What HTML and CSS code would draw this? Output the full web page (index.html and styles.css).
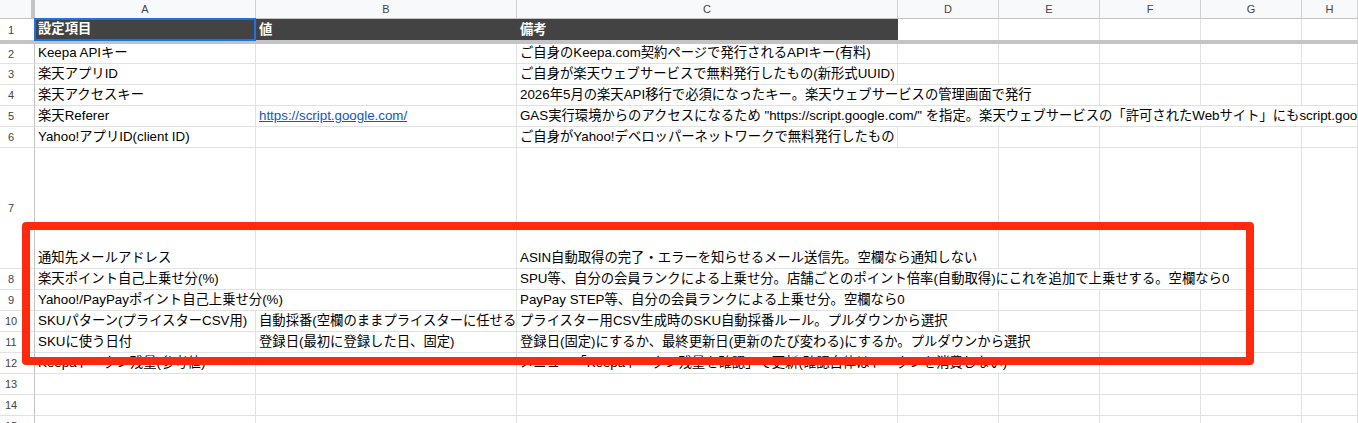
FILE: index.html
```html
<!DOCTYPE html>
<html lang="ja">
<head>
<meta charset="utf-8">
<title>設定</title>
<link rel="stylesheet" href="styles.css">
</head>
<body>
<div class="sheet">
  <div class="row colhead">
    <div class="corner"></div>
    <div class="ch">A</div><div class="ch">B</div><div class="ch">C</div><div class="ch">D</div><div class="ch">E</div><div class="ch">F</div><div class="ch">G</div><div class="ch">H</div>
  </div>

  <div class="row r1">
    <div class="rn">1</div>
    <div class="c hd sel">設定項目</div>
    <div class="c hd">値</div>
    <div class="c hd">備考</div>
    <div class="c"></div><div class="c"></div><div class="c"></div><div class="c"></div><div class="c"></div>
  </div>
  <div class="freeze"></div>

  <div class="row r2">
    <div class="rn">2</div>
    <div class="c">Keepa APIキー</div>
    <div class="c"></div>
    <div class="c">ご自身のKeepa.com契約ページで発行されるAPIキー(有料)</div>
    <div class="c"></div><div class="c"></div><div class="c"></div><div class="c"></div><div class="c"></div>
  </div>

  <div class="row">
    <div class="rn">3</div>
    <div class="c">楽天アプリID</div>
    <div class="c"></div>
    <div class="c">ご自身が楽天ウェブサービスで無料発行したもの(新形式UUID)</div>
    <div class="c"></div><div class="c"></div><div class="c"></div><div class="c"></div><div class="c"></div>
  </div>

  <div class="row">
    <div class="rn">4</div>
    <div class="c">楽天アクセスキー</div>
    <div class="c"></div>
    <div class="c span3">2026年5月の楽天API移行で必須になったキー。楽天ウェブサービスの管理画面で発行</div>
    <div class="c"></div><div class="c"></div><div class="c"></div>
  </div>

  <div class="row">
    <div class="rn">5</div>
    <div class="c">楽天Referer</div>
    <div class="c"><a class="link" href="#">https://script.google.com/</a></div>
    <div class="c spanall clip">GAS実行環境からのアクセスになるため "https://script.google.com/" を指定。楽天ウェブサービスの「許可されたWebサイト」にもscript.google.com を登録</div>
  </div>

  <div class="row">
    <div class="rn">6</div>
    <div class="c">Yahoo!アプリID(client ID)</div>
    <div class="c"></div>
    <div class="c">ご自身がYahoo!デベロッパーネットワークで無料発行したもの</div>
    <div class="c"></div><div class="c"></div><div class="c"></div><div class="c"></div><div class="c"></div>
  </div>

  <div class="row r7">
    <div class="rn">7</div>
    <div class="c">通知先メールアドレス</div>
    <div class="c"></div>
    <div class="c span2">ASIN自動取得の完了・エラーを知らせるメール送信先。空欄なら通知しない</div>
    <div class="c"></div><div class="c"></div><div class="c"></div><div class="c"></div>
  </div>

  <div class="row">
    <div class="rn">8</div>
    <div class="c">楽天ポイント自己上乗せ分(%)</div>
    <div class="c"></div>
    <div class="c span5">SPU等、自分の会員ランクによる上乗せ分。店舗ごとのポイント倍率(自動取得)にこれを追加で上乗せする。空欄なら0</div>
    <div class="c"></div>
  </div>

  <div class="row">
    <div class="rn">9</div>
    <div class="c span2">Yahoo!/PayPayポイント自己上乗せ分(%)</div>
    <div class="c span2">PayPay STEP等、自分の会員ランクによる上乗せ分。空欄なら0</div>
    <div class="c"></div><div class="c"></div><div class="c"></div><div class="c"></div>
  </div>

  <div class="row">
    <div class="rn">10</div>
    <div class="c">SKUパターン(プライスターCSV用)</div>
    <div class="c clip">自動採番(空欄のままプライスターに任せる)</div>
    <div class="c span2">プライスター用CSV生成時のSKU自動採番ルール。プルダウンから選択</div>
    <div class="c"></div><div class="c"></div><div class="c"></div><div class="c"></div>
  </div>

  <div class="row">
    <div class="rn">11</div>
    <div class="c">SKUに使う日付</div>
    <div class="c">登録日(最初に登録した日、固定)</div>
    <div class="c span3">登録日(固定)にするか、最終更新日(更新のたび変わる)にするか。プルダウンから選択</div>
    <div class="c"></div><div class="c"></div><div class="c"></div>
  </div>

  <div class="row">
    <div class="rn">12</div>
    <div class="c">Keepaトークン残量(参考値)</div>
    <div class="c"></div>
    <div class="c span3">メニュー「Keepaトークン残量を確認」で更新(確認自体はトークンを消費しない)</div>
    <div class="c"></div><div class="c"></div><div class="c"></div>
  </div>

  <div class="row">
    <div class="rn">13</div>
    <div class="c"></div><div class="c"></div><div class="c"></div><div class="c"></div><div class="c"></div><div class="c"></div><div class="c"></div><div class="c"></div>
  </div>
  <div class="row">
    <div class="rn">14</div>
    <div class="c"></div><div class="c"></div><div class="c"></div><div class="c"></div><div class="c"></div><div class="c"></div><div class="c"></div><div class="c"></div>
  </div>
  <div class="row">
    <div class="rn">15</div>
    <div class="c"></div><div class="c"></div><div class="c"></div><div class="c"></div><div class="c"></div><div class="c"></div><div class="c"></div><div class="c"></div>
  </div>

  <div class="highlight"></div>
</div>
</body>
</html>
```

FILE: styles.css
```css
* { box-sizing: border-box; }
html, body {
  margin: 0;
  padding: 0;
  background: #fff;
  overflow: hidden;
}
.sheet {
  position: relative;
  width: 1358px;
  height: 423px;
  overflow: hidden;
  font-family: "Liberation Sans", Arial, "Noto Sans CJK JP", sans-serif;
  font-size: 13.33px;
  color: #000;
}
.row {
  display: grid;
  grid-template-columns: 35px 221px 261px 381px 101px 101px 101px 101px 56px;
  height: 21px;
}
.colhead {
  height: 19px;
  background: #f8f9fa;
}
.corner {
  border-right: 4px solid #c4c4c4;
  border-bottom: 1px solid #c4c4c4;
  background: #f8f9fa;
}
.ch {
  border-right: 1px solid #d0d0d0;
  border-bottom: 1px solid #c4c4c4;
  color: #444;
  font-size: 11px;
  line-height: 18px;
  text-align: center;
}
.rn {
  border-right: 1px solid #c4c4c4;
  border-bottom: 1px solid #e1e1e1;
  color: #444;
  font-size: 11px;
  display: flex;
  align-items: center;
  justify-content: center;
  padding-right: 12px;
  background: #fff;
}
.c {
  border-right: 1px solid #e1e1e1;
  border-bottom: 1px solid #e1e1e1;
  padding: 0 3px 2px 3px;
  line-height: 16px;
  white-space: nowrap;
  display: flex;
  align-items: flex-end;
  min-width: 0;
}
.clip { overflow: hidden; }
.span2 { grid-column: span 2; }
.span3 { grid-column: span 3; }
.span5 { grid-column: span 5; }
.spanall { grid-column: 4 / -1; }

.r1 .rn { border-bottom: none; }
.r1 .c { border-bottom: none; }
.c.hd {
  background: #434343;
  color: #fff;
  font-weight: bold;
  border-right-color: #434343;
}
.c.sel {
  border: 2px solid #1a73e8;
  margin: -1px 0 -1px -1px;
  padding-left: 2px;
}
.freeze {
  height: 4px;
  background: #c4c4c4;
}
.r2 { height: 20px; }
.r7 { height: 121px; }

.link {
  color: #1155cc;
  text-decoration: underline;
}

.highlight {
  position: absolute;
  left: 22px;
  top: 222px;
  width: 1232px;
  height: 143px;
  border: 8px solid #ff2a0d;
  border-radius: 4px;
  pointer-events: none;
}
```
